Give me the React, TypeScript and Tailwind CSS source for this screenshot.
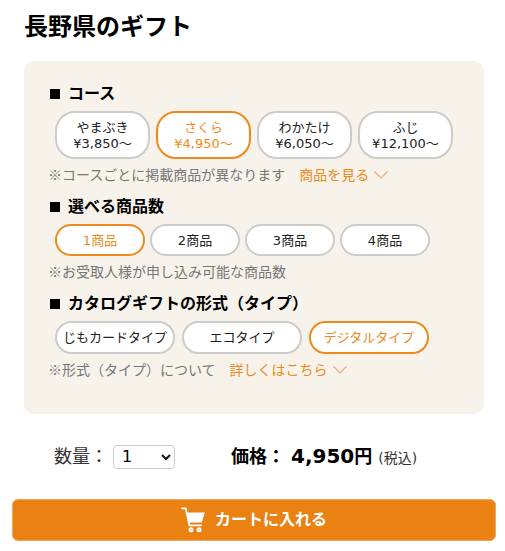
import { useState } from "react";

type Option = {
  name: string;
  price?: string;
};

const COURSES: Option[] = [
  { name: "やまぶき", price: "¥3,850～" },
  { name: "さくら", price: "¥4,950～" },
  { name: "わかたけ", price: "¥6,050～" },
  { name: "ふじ", price: "¥12,100～" },
];

const COUNTS: Option[] = [
  { name: "1商品" },
  { name: "2商品" },
  { name: "3商品" },
  { name: "4商品" },
];

const TYPES: Option[] = [
  { name: "じもカードタイプ" },
  { name: "エコタイプ" },
  { name: "デジタルタイプ" },
];

type OptionGroupProps = {
  title: string;
  group: string;
  options: Option[];
  initial: string;
  rowClass: string;
  pillClass: string;
  children: React.ReactNode;
};

const OptionGroup = ({
  title,
  group,
  options,
  initial,
  rowClass,
  pillClass,
  children,
}: OptionGroupProps) => {
  const [selected, setSelected] = useState(initial);

  return (
    <section>
      <h2 id={group} className="flex items-center text-base leading-6 font-bold">
        <span className="ml-0.5 mr-2 size-2.5 bg-black" />
        {title}
      </h2>
      <div
        role="radiogroup"
        aria-labelledby={group}
        className={`mt-[5px] flex flex-wrap pl-[7px] ${rowClass}`}
      >
        {options.map(({ name, price }) => (
          <label
            key={name}
            className={`relative flex cursor-pointer flex-col items-center justify-center border-2 border-[#ccc] bg-white pt-px text-[13px] leading-4 whitespace-nowrap text-[#222] has-checked:border-[#ee8a1d] has-checked:text-[#ee8a1d] ${pillClass}`}
          >
            <input
              type="radio"
              className="sr-only"
              name={group}
              value={name}
              checked={selected === name}
              onChange={() => setSelected(name)}
            />
            <span>{name}</span>
            {price && <span>{price}</span>}
          </label>
        ))}
      </div>
      <p className="mt-[5px] font-['Noto_Sans_CJK_JP',sans-serif] text-sm leading-[21px] text-[#777]">
        {children}
      </p>
    </section>
  );
};

const MoreLink = ({ text }: { text: string }) => (
  <a href="#" className="ml-3.5 inline-flex items-center gap-1 text-[#ee8a1d]">
    {text}
    <svg
      className="h-2 w-4"
      viewBox="0 0 16 8"
      fill="none"
      stroke="#f3ab78"
      strokeWidth="1.2"
    >
      <path d="M1.5 0.5 8 7 14.5 0.5" />
    </svg>
  </a>
);

const CartIcon = () => (
  <svg className="h-[26px] w-6" viewBox="0 0 24 26" fill="#fff">
    <path d="M0.3 0.5H5.4L6.5 5.4H23.7L20.8 15.6H8.8L9.2 17.6H20.8V19.2H7.6L4 2.3H0.3Z" />
    <circle cx="10" cy="22.8" r="2.5" />
    <circle cx="18" cy="22.8" r="2.5" />
    <circle cx="10" cy="22.8" r="0.8" fill="#f4bd85" />
    <circle cx="18" cy="22.8" r="0.8" fill="#f4bd85" />
  </svg>
);

export default function App() {
  const [quantity, setQuantity] = useState("1");

  return (
    <main
      lang="ja"
      className="bg-white pt-[9px] pr-[9px] pb-2.5 pl-3 font-['DejaVu_Sans','Noto_Sans_CJK_JP',sans-serif] text-black"
    >
      <h1 className="pl-3 text-2xl leading-9 font-bold">長野県のギフト</h1>

      <div className="mx-3 mt-4 flex flex-col gap-2.5 rounded-[10px] bg-[#f7f2ea] px-6 pt-[21px] pb-[34px]">
        <OptionGroup
          title="コース"
          group="course"
          options={COURSES}
          initial="さくら"
          rowClass="gap-1.5"
          pillClass="h-12 w-[95px] rounded-[20px]"
        >
          ※コースごとに掲載商品が異なります
          <MoreLink text="商品を見る" />
        </OptionGroup>
        <OptionGroup
          title="選べる商品数"
          group="count"
          options={COUNTS}
          initial="1商品"
          rowClass="gap-[5px]"
          pillClass="h-8 w-[90px] rounded-full"
        >
          ※お受取人様が申し込み可能な商品数
        </OptionGroup>
        <OptionGroup
          title="カタログギフトの形式（タイプ）"
          group="type"
          options={TYPES}
          initial="デジタルタイプ"
          rowClass="gap-[7px]"
          pillClass="h-[33px] w-[120px] rounded-full"
        >
          ※形式（タイプ）について
          <MoreLink text="詳しくはこちら" />
        </OptionGroup>
      </div>

      <div className="mt-7 flex items-center pl-[42px]">
        <label htmlFor="quantity" className="text-lg text-[#333]">
          数量：
        </label>
        <div className="relative ml-[5px]">
          <select
            id="quantity"
            className="h-6 w-[62px] appearance-none rounded border border-[#ccc] bg-white pl-2 text-base leading-5"
            value={quantity}
            onChange={(e) => setQuantity(e.target.value)}
          >
            <option>1</option>
            <option>2</option>
            <option>3</option>
            <option>4</option>
            <option>5</option>
          </select>
          <svg
            className="pointer-events-none absolute top-2 right-1 h-2 w-2.5"
            viewBox="0 0 10 8"
            fill="none"
            stroke="#111"
            strokeWidth="2"
          >
            <path d="M1 2 5 6 9 2" />
          </svg>
        </div>
        <p className="ml-14 flex items-baseline text-lg font-bold">
          価格：
          <span className="ml-1.5 text-xl">4,950</span>円
          <span className="ml-1.5 text-sm font-normal text-[#333]">(税込)</span>
        </p>
      </div>

      <button
        type="button"
        className="mt-7 flex h-[42px] w-full cursor-pointer items-center justify-center gap-2.5 rounded-md border border-[#f0a85c] bg-[#e98113] text-base font-bold text-white"
      >
        <CartIcon />
        カートに入れる
      </button>
    </main>
  );
}
